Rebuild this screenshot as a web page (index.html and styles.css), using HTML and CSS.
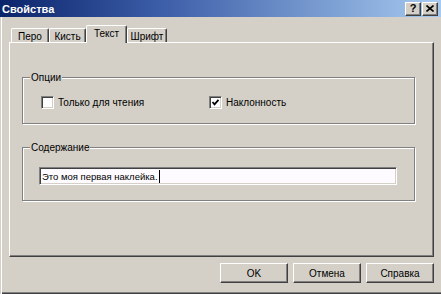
FILE: index.html
```html
<!DOCTYPE html>
<html lang="ru">
<head>
<meta charset="utf-8">
<title>Свойства</title>
<link rel="stylesheet" href="styles.css">
</head>
<body>
<div class="window">
  <div class="titlebar">
    <span class="title">Свойства</span>
    <div class="caption-btns">
      <span class="cap cap-help">?</span>
      <span class="cap cap-close">
        <svg width="8" height="7" viewBox="0 0 8 7"><path d="M0.5 0.5 L7.5 6.5 M7.5 0.5 L0.5 6.5" stroke="#000" stroke-width="1.6" fill="none"/></svg>
      </span>
    </div>
  </div>
  <div class="body">
    <div class="tabs">
      <span class="tab t1">Перо</span>
      <span class="tab t2">Кисть</span>
      <span class="tab t3 active">Текст</span>
      <span class="tab t4">Шрифт</span>
    </div>
    <div class="panel">
      <div class="group g1">
        <span class="legend">Опции</span>
        <div class="checks">
          <label class="check c1"><span class="box"></span><span>Только для чтения</span></label>
          <label class="check c2"><span class="box"><svg width="9" height="9" viewBox="0 0 9 9"><polyline points="1.5,4 3.5,6.3 7.5,1.8" stroke="#000" stroke-width="1.8" fill="none"/></svg></span><span>Наклонность</span></label>
        </div>
      </div>
      <div class="group g2">
        <span class="legend">Содержание</span>
        <div class="textbox"><span>Это моя первая наклейка.</span><span class="caret"></span></div>
      </div>
    </div>
    <div class="buttons">
      <span class="btn">OK</span>
      <span class="btn">Отмена</span>
      <span class="btn">Справка</span>
    </div>
  </div>
</div>
</body>
</html>
```
FILE: styles.css
```css
html, body {
  margin: 0;
  padding: 0;
}
body {
  width: 441px;
  height: 294px;
  overflow: hidden;
  background: #d4d0c8;
  font-family: "Liberation Sans", Arial, sans-serif;
  font-size: 10px;
  color: #000;
}
.window {
  width: 441px;
  height: 294px;
  box-sizing: border-box;
  background: #d4d0c8;
  box-shadow: inset 0 -1px 0 #404040, inset 0 -2px 0 #808080;
  display: flex;
  flex-direction: column;
}
.titlebar {
  height: 17px;
  flex: none;
  background: linear-gradient(to right, #0a246a 0%, #3a5ba6 35%, #a6caf0 100%);
  display: flex;
  align-items: center;
  justify-content: space-between;
  padding-left: 2px;
}
.title {
  color: #fff;
  font-weight: bold;
  font-size: 11px;
}
.caption-btns {
  display: flex;
  gap: 1px;
  margin-right: 3px;
}
.cap {
  width: 16px;
  height: 14px;
  box-sizing: border-box;
  background: #d4d0c8;
  border-top: 1px solid #fff;
  border-left: 1px solid #fff;
  border-right: 1px solid #404040;
  border-bottom: 1px solid #404040;
  box-shadow: inset -1px -1px 0 #808080;
  display: flex;
  align-items: center;
  justify-content: center;
  font-weight: bold;
  font-size: 11px;
  line-height: 1;
}
.body {
  flex: 1;
  border-left: 1px solid #d4d0c8;
  box-shadow: inset 1px 0 0 #fff;
  padding: 8px 0 0 8px;
  display: flex;
  flex-direction: column;
}
.tabs {
  height: 17px;
  display: flex;
  align-items: flex-end;
  padding-left: 2px;
  position: relative;
  z-index: 1;
}
.tab {
  box-sizing: border-box;
  height: 14px;
  border-top: 1px solid #fff;
  border-left: 1px solid #fff;
  border-right: 1px solid #404040;
  box-shadow: inset -1px 0 0 #808080;
  border-radius: 2px 2px 0 0;
  display: flex;
  align-items: center;
  justify-content: center;
  padding-top: 1px;
}
.t1 { width: 38px; }
.t2 { width: 37px; }
.t3 { width: 41px; }
.t4 { width: 40px; }
.tab.active {
  height: 18px;
  margin-bottom: -1px;
  background: #d4d0c8;
  padding-bottom: 3px;
}
.panel {
  width: 425px;
  height: 215px;
  box-sizing: border-box;
  border-top: 1px solid #fff;
  border-left: 1px solid #fff;
  border-right: 1px solid #404040;
  border-bottom: 1px solid #404040;
  box-shadow: inset -1px -1px 0 #808080;
  padding: 34px 0 0 12px;
}
.group {
  position: relative;
  width: 393px;
  box-sizing: border-box;
  border: 1px solid #808080;
  box-shadow: inset 1px 1px 0 #fff, 1px 1px 0 #fff;
}
.legend {
  position: absolute;
  top: -7px;
  left: 7px;
  padding: 0 1px;
  line-height: 13px;
  background: #d4d0c8;
}
.g1 {
  height: 47px;
  padding: 18px 0 0 18px;
}
.checks {
  display: flex;
}
.check {
  display: flex;
  align-items: center;
  gap: 4px;
  height: 13px;
}
.c1 { width: 168px; }
.box {
  width: 13px;
  height: 13px;
  box-sizing: border-box;
  background: #fff;
  border-top: 1px solid #808080;
  border-left: 1px solid #808080;
  border-right: 1px solid #fff;
  border-bottom: 1px solid #fff;
  box-shadow: inset 1px 1px 0 #404040, inset -1px -1px 0 #d4d0c8;
  display: flex;
  align-items: center;
  justify-content: center;
}
.g2 {
  margin-top: 23px;
  height: 54px;
  padding: 19px 0 0 16px;
}
.textbox {
  width: 358px;
  height: 18px;
  box-sizing: border-box;
  background: #fdfbff;
  border-top: 1px solid #808080;
  border-left: 1px solid #808080;
  border-right: 1px solid #fff;
  border-bottom: 1px solid #fff;
  box-shadow: inset 1px 1px 0 #404040, inset -1px -1px 0 #d4d0c8;
  display: flex;
  align-items: center;
  padding-left: 2px;
  font-size: 9.5px;
}
.caret {
  width: 1px;
  height: 13px;
  background: #000;
  margin-left: 1px;
}
.buttons {
  display: flex;
  justify-content: flex-end;
  gap: 5px;
  margin-top: 6px;
  padding-right: 7px;
}
.btn {
  width: 68px;
  height: 20px;
  box-sizing: border-box;
  border-top: 1px solid #fff;
  border-left: 1px solid #fff;
  border-right: 1px solid #404040;
  border-bottom: 1px solid #404040;
  box-shadow: inset -1px -1px 0 #808080;
  display: flex;
  align-items: center;
  justify-content: center;
}
```
